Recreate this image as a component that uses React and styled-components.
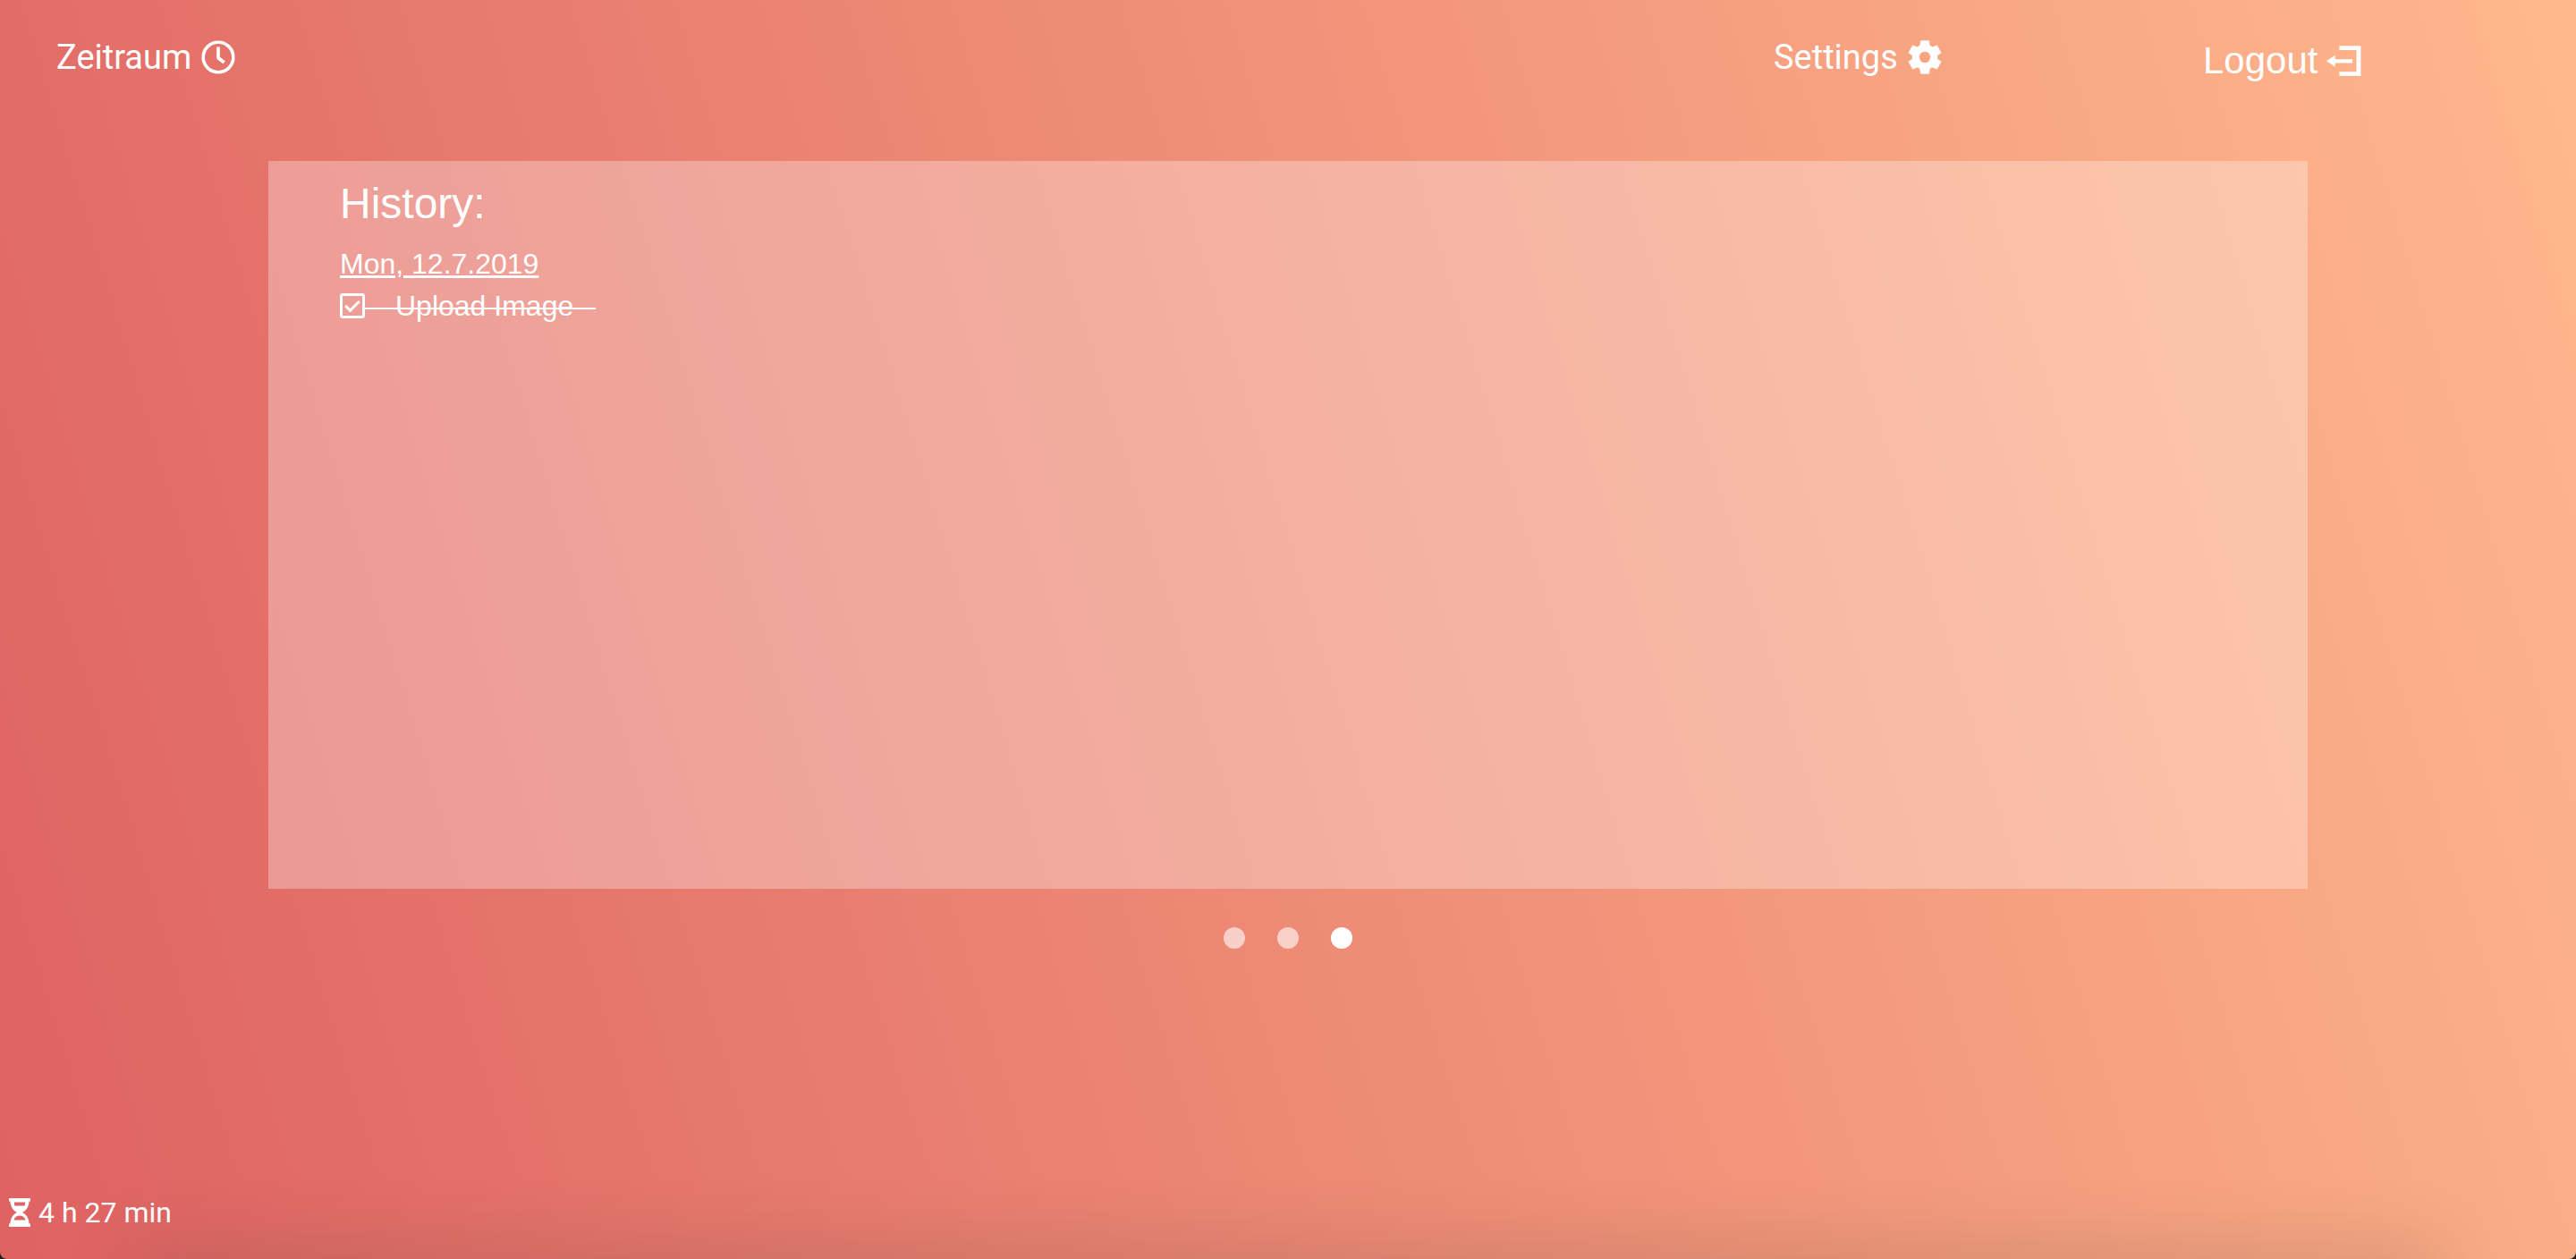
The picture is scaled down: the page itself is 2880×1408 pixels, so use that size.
import React from "react";
import styled, { createGlobalStyle } from "styled-components";

const system = `Roboto, Inter, sans-serif`;
const arial = `"Liberation Sans", Arial, sans-serif`;

const GlobalStyle = createGlobalStyle`
  *, *::before, *::after { box-sizing: border-box; }
  body { margin: 0; color: #fff; background: #222; font-family: ${system}; }
  h1, h2, ul { margin: 0; padding: 0; font-weight: 400; list-style: none; }
`;

const Page = styled.div`
  position: relative;
  display: flex;
  flex-direction: column;
  min-height: 100vh;
  overflow: hidden;
  border-radius: 0 0 8px 8px;
  background: linear-gradient(73deg, #de6262, #ffb88c);
`;

const DockShade = styled.div`
  position: absolute;
  left: 160px;
  right: 160px;
  bottom: -40px;
  height: 40px;
  box-shadow: 0 0 80px 12px rgba(60, 60, 50, 0.18);
  pointer-events: none;
`;

const Nav = styled.nav`
  display: grid;
  grid-template-columns: repeat(6, 1fr);
  height: 180px;
  padding-top: 40px;
`;

const NavLink = styled.a`
  grid-column: ${(p) => p.$column};
  justify-self: start;
  align-self: start;
  display: flex;
  align-items: center;
  gap: 8px;
  padding-left: 63px;
  padding-top: ${(p) => (p.$classic ? 4 : 0)}px;
  color: inherit;
  text-decoration: none;
  white-space: nowrap;
  font-family: ${(p) => (p.$classic ? arial : system)};
  font-size: ${(p) => (p.$classic ? 42 : 38)}px;
  line-height: 48px;
`;

const Icon = styled.svg`
  display: block;
  width: 44px;
  height: 44px;
  fill: currentColor;
`;

const SandGlass = styled.svg`
  display: block;
  width: 24px;
  height: 32px;
  fill: currentColor;
`;

const Panel = styled.main`
  width: calc(100% - 600px);
  min-height: 814px;
  margin: 0 auto;
  padding: 20px 80px;
  background: rgba(255, 255, 255, 0.3);
  font-family: ${arial};
`;

const Title = styled.h1`
  font-size: 48px;
  line-height: 56px;
`;

const Day = styled.h2`
  margin-top: 19px;
  font-size: 32px;
  line-height: 40px;
  text-decoration: underline;
`;

const Task = styled.li`
  display: flex;
  align-items: center;
  height: 54px;
  font-size: 32px;
`;

const Check = styled.input`
  appearance: none;
  display: grid;
  place-items: center;
  width: 28px;
  height: 28px;
  margin: 0;
  border: 3px solid #fff;
  border-radius: 3px;

  &:checked::before {
    content: "";
    width: 16px;
    height: 9px;
    border-left: 3px solid #fff;
    border-bottom: 3px solid #fff;
    transform: translateY(-2px) rotate(-45deg);
  }
`;

const TaskLabel = styled.label`
  position: relative;
  padding: 0 25px 0 34px;

  &::after {
    content: "";
    position: absolute;
    left: 0;
    right: 0;
    top: calc(50% + 2px);
    height: 2px;
    background: #fff;
  }
`;

const Dots = styled.div`
  display: flex;
  justify-content: center;
  gap: 36px;
  padding-top: 43px;
`;

const Dot = styled.button`
  width: 24px;
  height: 24px;
  padding: 0;
  border: 0;
  border-radius: 50%;
  background: #fff;
  opacity: ${(p) => (p.$active ? 1 : 0.6)};
`;

const Timer = styled.footer`
  display: flex;
  align-items: center;
  gap: 9px;
  margin-top: auto;
  padding: 0 0 32px 10px;
  font-size: 32px;
  line-height: 40px;
`;

const ClockIcon = () => (
  <Icon viewBox="0 0 44 44" aria-hidden="true">
    <circle cx="22" cy="22" r="16.8" fill="none" stroke="currentColor" strokeWidth="3.6" />
    <path d="M20.2 10.5H23.8V21.6L29.8 26.4L27.4 29.4L20.2 23.8Z" />
  </Icon>
);

const GearIcon = () => (
  <Icon viewBox="-22 -22 44 44" aria-hidden="true">
    <mask id="hub">
      <rect x="-22" y="-22" width="44" height="44" fill="#fff" />
      <circle r="6.2" fill="#000" />
    </mask>
    <g mask="url(#hub)">
      <circle r="14.2" />
      {[0, 60, 120].map((angle) => (
        <path
          key={angle}
          transform={`rotate(${angle})`}
          d="M-4.6 -18.2H4.6L5.2 -13V13L4.6 18.2H-4.6L-5.2 13V-13Z"
          stroke="currentColor"
          strokeWidth="0.8"
          strokeLinejoin="round"
        />
      ))}
    </g>
  </Icon>
);

const LogoutIcon = () => (
  <Icon viewBox="-2 -5 44 44" aria-hidden="true">
    <path d="M0 17.3L9.6 10.8V15.2H29V19.4H9.6V23.8Z" />
    <path d="M14.4 0.3H38.4V34H14.4V29.3H33.5V5H14.4Z" />
  </Icon>
);

const HourglassIcon = () => (
  <SandGlass viewBox="0 0 24 32" aria-hidden="true">
    <path
      fillRule="evenodd"
      d="M0 0H24V3.6H22.6C22 10 19.4 14 15 16C19.4 18 22 22 22.6 28.4H24V32H0V28.4H1.4C2 22 4.6 18 9 16C4.6 14 2 10 1.4 3.6H0ZM5.8 4.4L6.4 8.4H17.6L18.2 4.4ZM5.4 24.6H18.6C17.4 21 15.2 19.4 12 19.4S6.6 21 5.4 24.6Z"
    />
  </SandGlass>
);

export default function App() {
  return (
    <Page>
      <GlobalStyle />
      <DockShade />
      <Nav>
        <NavLink href="#zeitraum" $column={1}>
          Zeitraum <ClockIcon />
        </NavLink>
        <NavLink href="#settings" $column={5}>
          Settings <GearIcon />
        </NavLink>
        <NavLink href="#logout" $column={6} $classic>
          Logout <LogoutIcon />
        </NavLink>
      </Nav>
      <Panel>
        <Title>History:</Title>
        <Day>Mon, 12.7.2019</Day>
        <ul>
          <Task>
            <Check type="checkbox" id="upload" defaultChecked />
            <TaskLabel htmlFor="upload">Upload Image</TaskLabel>
          </Task>
        </ul>
      </Panel>
      <Dots>
        <Dot type="button" aria-label="1" />
        <Dot type="button" aria-label="2" />
        <Dot type="button" aria-label="3" $active />
      </Dots>
      <Timer>
        <HourglassIcon />
        4 h 27 min
      </Timer>
    </Page>
  );
}
